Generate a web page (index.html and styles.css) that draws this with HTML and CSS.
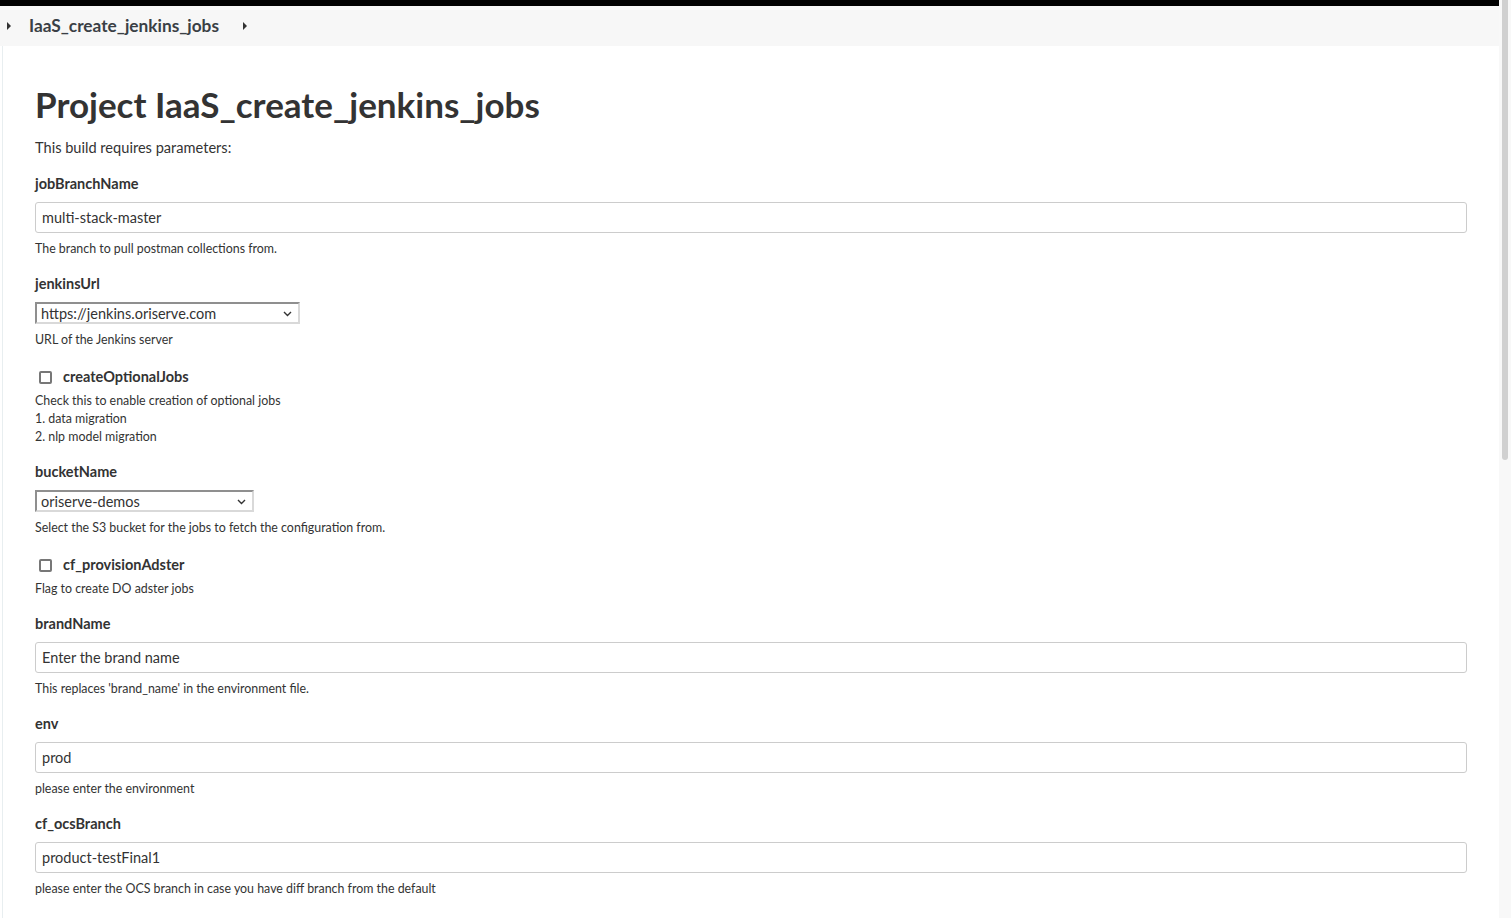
FILE: index.html
```html
<!DOCTYPE html>
<html>
<head>
<meta charset="utf-8">
<title>IaaS_create_jenkins_jobs</title>
<link rel="stylesheet" href="styles.css">
</head>
<body>
<div class="viewport">
  <div class="page">
    <div class="topbar"></div>
    <div class="crumbs">
      <span class="tri"><svg width="5" height="8" viewBox="0 0 5 8"><path d="M0 0 L4 4 L0 8 Z" fill="#333"/></svg></span>
      <span class="crumb-text">IaaS_create_jenkins_jobs</span>
      <span class="tri tri2"><svg width="5" height="8" viewBox="0 0 5 8"><path d="M0 0 L4 4 L0 8 Z" fill="#333"/></svg></span>
    </div>
    <main class="main">
      <h1 class="title">Project IaaS_create_jenkins_jobs</h1>
      <p class="intro">This build requires parameters:</p>

      <div class="param">
        <div class="label">jobBranchName</div>
        <input class="text" type="text" value="multi-stack-master">
        <div class="desc">The branch to pull postman collections from.</div>
      </div>

      <div class="param">
        <div class="label">jenkinsUrl</div>
        <div class="select sel-url"><span class="select-val">https://jenkins.oriserve.com</span><svg class="chev" width="9" height="6" viewBox="0 0 9 6"><path d="M1 1 L4.5 4.5 L8 1" fill="none" stroke="#333" stroke-width="1.4"/></svg></div>
        <div class="desc">URL of the Jenkins server</div>
      </div>

      <div class="param param-check">
        <label class="check-row"><span class="box"></span><span class="check-label">createOptionalJobs</span></label>
        <div class="desc desc-check">Check this to enable creation of optional jobs<br>1. data migration<br>2. nlp model migration</div>
      </div>

      <div class="param">
        <div class="label">bucketName</div>
        <div class="select sel-bucket"><span class="select-val">oriserve-demos</span><svg class="chev" width="9" height="6" viewBox="0 0 9 6"><path d="M1 1 L4.5 4.5 L8 1" fill="none" stroke="#333" stroke-width="1.4"/></svg></div>
        <div class="desc">Select the S3 bucket for the jobs to fetch the configuration from.</div>
      </div>

      <div class="param param-check">
        <label class="check-row"><span class="box"></span><span class="check-label">cf_provisionAdster</span></label>
        <div class="desc desc-check">Flag to create DO adster jobs</div>
      </div>

      <div class="param">
        <div class="label">brandName</div>
        <input class="text" type="text" value="Enter the brand name">
        <div class="desc">This replaces 'brand_name' in the environment file.</div>
      </div>

      <div class="param">
        <div class="label">env</div>
        <input class="text" type="text" value="prod">
        <div class="desc">please enter the environment</div>
      </div>

      <div class="param">
        <div class="label">cf_ocsBranch</div>
        <input class="text" type="text" value="product-testFinal1">
        <div class="desc">please enter the OCS branch in case you have diff branch from the default</div>
      </div>

      <div class="param">
        <div class="label">cf_knowledgeBranch</div>
        <input class="text" type="text" value="master">
        <div class="desc">please enter the branch</div>
      </div>
    </main>
  </div>
  <div class="scrollbar"><div class="thumb"></div></div>
</div>
</body>
</html>
```
FILE: styles.css
```css
html, body {
  margin: 0;
  padding: 0;
  height: 100%;
  overflow: hidden;
  background: #ffffff;
}
body {
  font-family: Lato, "Open Sans", sans-serif;
  color: #333333;
}
.viewport {
  display: flex;
  height: 918px;
  overflow: hidden;
}
.page {
  flex: 1;
  min-width: 0;
  display: flex;
  flex-direction: column;
}
.topbar {
  height: 6px;
  background: #000000;
  flex: none;
}
.crumbs {
  height: 40px;
  flex: none;
  background: #f7f7f7;
  display: flex;
  align-items: center;
}
.tri {
  display: flex;
  margin-left: 7px;
  width: 5px;
}
.tri2 {
  margin-left: 24px;
}
.crumb-text {
  margin-left: 17px;
  font-size: 17.3px;
  font-weight: 700;
  color: #3a3f45;
  line-height: 20px;
}
.main {
  flex: 1;
  margin-left: 2px;
  border-left: 1px solid #e8eef0;
  padding: 38px 32px 0 32px;
}
.title {
  margin: 0;
  font-size: 35px;
  line-height: 40px;
  font-weight: 700;
  color: #333;
}
.intro {
  margin: 14px 0 0 0;
  font-size: 14.6px;
  line-height: 20px;
}
.param {
  margin-top: 15px;
}
.label {
  font-size: 14.5px;
  font-weight: 700;
  line-height: 20px;
  padding-top: 1px;
  margin-bottom: 8px;
}
.text {
  display: block;
  box-sizing: border-box;
  width: 100%;
  height: 31px;
  margin: 0;
  padding: 0 6px;
  border: 1px solid #cccccc;
  border-radius: 3px;
  font-family: inherit;
  font-size: 14.5px;
  color: #333;
  background: #fff;
  outline: none;
}
.desc {
  margin-top: 7px;
  font-size: 12.4px;
  line-height: 18px;
}
.select {
  position: relative;
  box-sizing: border-box;
  height: 22px;
  border-style: solid;
  border-width: 2px;
  border-color: #8f8f8f #d9d9d9 #d9d9d9 #8f8f8f;
  background: #fff;
  display: flex;
  align-items: center;
  padding-left: 4px;
  font-size: 14.5px;
}
.sel-url { width: 265px; }
.sel-bucket { width: 219px; }
.select-val {
  line-height: 18px;
  padding-top: 1px;
}
.chev {
  position: absolute;
  right: 6px;
  top: 7px;
}
.param.param-check {
  margin-top: 17px;
}
.check-row {
  display: flex;
  align-items: center;
  height: 20px;
  padding-top: 1px;
}
.box {
  box-sizing: border-box;
  width: 13px;
  height: 13px;
  margin-left: 4px;
  border: 2px solid #777;
  border-radius: 2px;
  background: #fff;
}
.check-label {
  margin-left: 11px;
  font-size: 14.5px;
  font-weight: 700;
  line-height: 20px;
}
.desc-check {
  margin-top: 5px;
}
.scrollbar {
  flex: none;
  width: 12px;
  background: #f8f8f8;
  position: relative;
}
.thumb {
  position: absolute;
  left: 3px;
  top: 0;
  width: 6px;
  height: 460px;
  background: #d0d0d0;
  border-radius: 0 0 3px 3px;
}
```
